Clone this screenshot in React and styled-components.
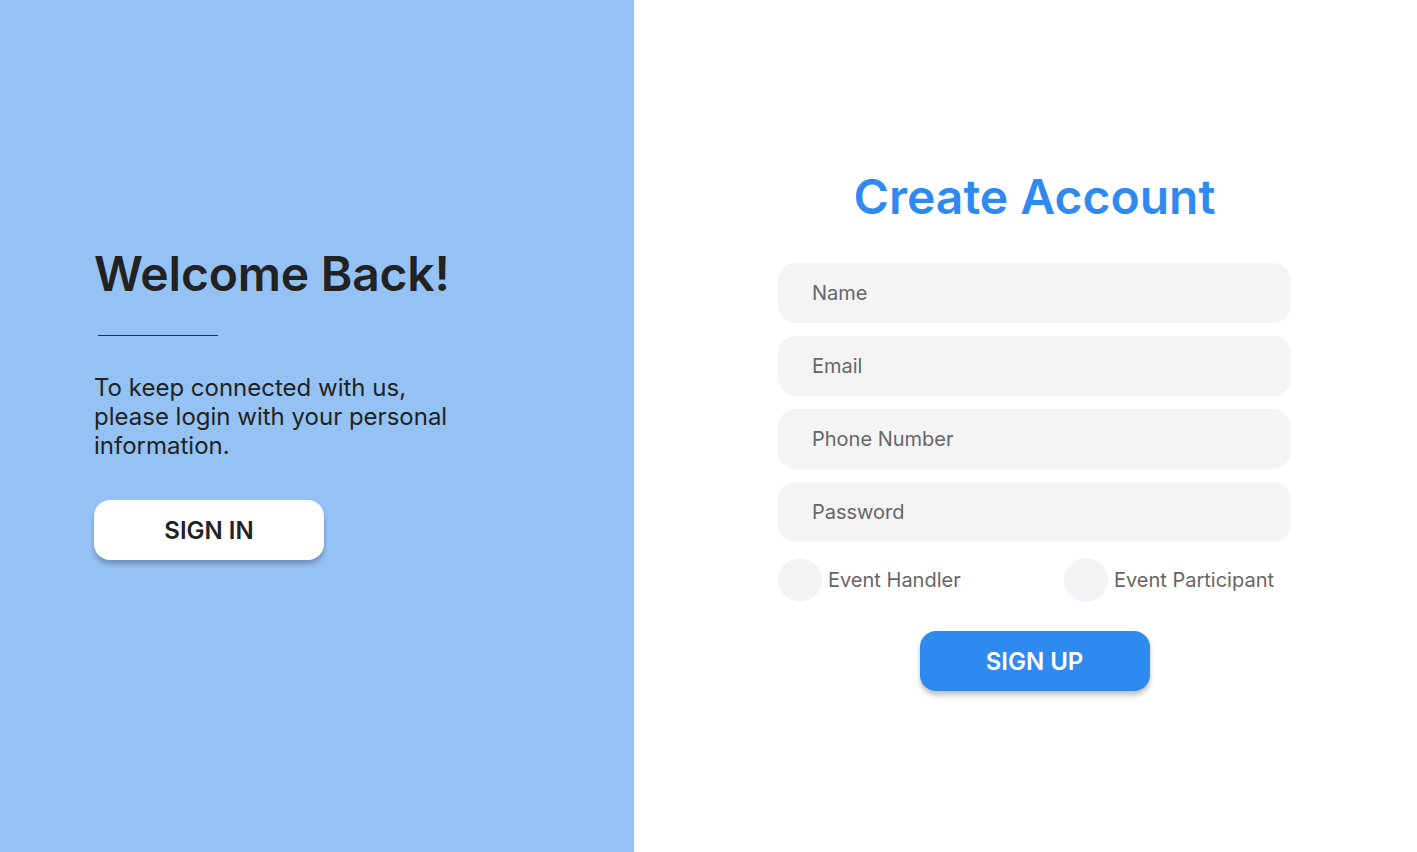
import React, { useState } from 'react'
import styled, { createGlobalStyle } from 'styled-components'

const GlobalStyle = createGlobalStyle`
	* { box-sizing: border-box; }
	body {
		margin: 0;
		font-family: Inter, 'Noto Sans', sans-serif;
	}
`

const Page = styled.div`
	display: flex;
	width: 100%;
	height: 852px;
	background: #ffffff;
`

const Side = styled.section`
	width: 634px;
	flex-shrink: 0;
	background: #94c2f5;
	padding: 245px 0 0 94px;
	display: flex;
	flex-direction: column;
	align-items: flex-start;
`

const Welcome = styled.h1`
	margin: 0;
	font-size: 48px;
	font-weight: 600;
	line-height: 58px;
	color: #222222;
	letter-spacing: -0.2px;
`

const Divider = styled.hr`
	width: 120px;
	border: none;
	border-top: 1px solid #2a2f3a;
	margin: 32px 0 0 4px;
`

const Blurb = styled.p`
	margin: 37px 0 0;
	width: 372px;
	font-size: 24px;
	line-height: 29px;
	color: #222222;
`

const Button = styled.button`
	width: 230px;
	height: 60px;
	border: none;
	border-radius: 16px;
	font-family: inherit;
	font-size: 24px;
	font-weight: 600;
	background: ${p => (p.primary ? '#2f8aef' : '#ffffff')};
	color: ${p => (p.primary ? '#ffffff' : '#222222')};
	box-shadow: 0 4px 5px rgba(0, 0, 0, 0.25);
	cursor: pointer;
`

const SignIn = styled(Button)`
	margin-top: 40px;
`

const Main = styled.main`
	flex: 1;
	padding: 168px 0 0 144px;
`

const Form = styled.form`
	width: 513px;
	display: flex;
	flex-direction: column;
	align-items: center;
`

const Title = styled.h2`
	margin: 0 0 37px;
	font-size: 48px;
	font-weight: 600;
	line-height: 58px;
	color: #2f8aef;
`

const Field = styled.input`
	width: 100%;
	height: 60px;
	border: none;
	border-radius: 18px;
	background: #f4f4f4;
	padding: 0 34px;
	margin-bottom: 13px;
	font-family: inherit;
	font-size: 20px;
	color: #444;
	outline: none;
	&::placeholder {
		color: #666666;
	}
`

const Roles = styled.div`
	width: 100%;
	display: flex;
	justify-content: space-between;
	margin-top: 3px;
`

const Role = styled.label`
	display: flex;
	align-items: center;
	gap: 6px;
	font-size: 20px;
	color: #666666;
	cursor: pointer;
	padding-right: 17px;
`

const Dot = styled.span`
	width: 44px;
	height: 44px;
	border-radius: 50%;
	background: ${p => (p.checked ? '#2f8aef' : '#f2f3f5')};
`

const SignUp = styled(Button)`
	margin-top: 29px;
`

const App = () => {
	const [role, setRole] = useState('')

	return (
		<Page>
			<GlobalStyle />
			<Side>
				<Welcome>Welcome Back!</Welcome>
				<Divider />
				<Blurb>To keep connected with us, please login with your personal information.</Blurb>
				<SignIn>SIGN IN</SignIn>
			</Side>
			<Main>
				<Form onSubmit={e => e.preventDefault()}>
					<Title>Create Account</Title>
					<Field placeholder="Name" />
					<Field placeholder="Email" />
					<Field placeholder="Phone Number" />
					<Field placeholder="Password" type="password" />
					<Roles>
						<Role onClick={() => setRole('handler')}>
							<Dot checked={role === 'handler'} />
							Event Handler
						</Role>
						<Role onClick={() => setRole('participant')}>
							<Dot checked={role === 'participant'} />
							Event Participant
						</Role>
					</Roles>
					<SignUp primary>SIGN UP</SignUp>
				</Form>
			</Main>
		</Page>
	)
}

export default App
